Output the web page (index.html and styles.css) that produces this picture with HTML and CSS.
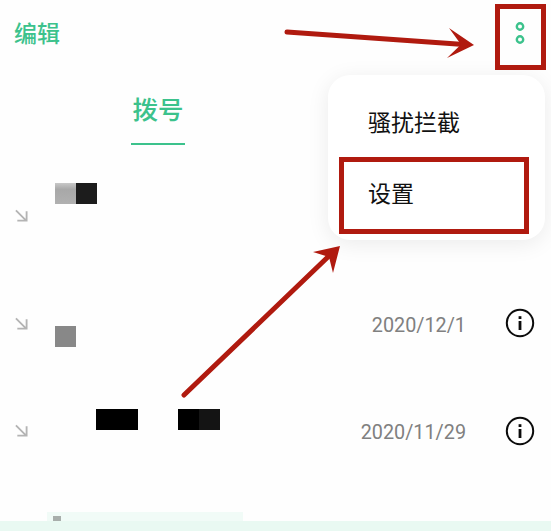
FILE: index.html
```html
<!DOCTYPE html>
<html lang="zh">
<head>
<meta charset="utf-8">
<title>拨号</title>
<link rel="stylesheet" href="styles.css">
</head>
<body>
<div class="screen">
  <header class="top">
    <span class="edit">编辑</span>
    <svg class="dots" viewBox="0 0 16 28" width="16" height="28"><circle cx="8" cy="7.5" r="3.2" /><circle cx="8" cy="20.5" r="3.2" /></svg>
  </header>
  <nav class="tabs"><div class="tab">拨号</div></nav>
  <section class="row row-a">
    <svg class="dir" viewBox="0 0 14 14"><path d="M1 1.5 11.5 12M12.5 2.5V12.5H2.5"/></svg>
    <div class="who"><i class="blur"></i><i class="ink"></i></div>
  </section>
  <section class="row row-b">
    <svg class="dir" viewBox="0 0 14 14"><path d="M1 1.5 11.5 12M12.5 2.5V12.5H2.5"/></svg>
    <div class="who"><i class="grey"></i></div>
    <span class="date">2020/12/1</span>
    <svg class="info" viewBox="0 0 30 30"><circle cx="15" cy="15" r="13.2"/><rect x="13.6" y="13" width="2.8" height="9"/><rect x="13.6" y="8.2" width="2.8" height="2.8"/></svg>
  </section>
  <section class="row row-c">
    <svg class="dir" viewBox="0 0 14 14"><path d="M1 1.5 11.5 12M12.5 2.5V12.5H2.5"/></svg>
    <div class="who who-c"><i class="ink wide"></i><i class="ink wide two"></i></div>
    <span class="date">2020/11/29</span>
    <svg class="info" viewBox="0 0 30 30"><circle cx="15" cy="15" r="13.2"/><rect x="13.6" y="13" width="2.8" height="9"/><rect x="13.6" y="8.2" width="2.8" height="2.8"/></svg>
  </section>
  <div class="peek"><i class="smudge"></i></div>
  <div class="strip"></div>

  <div class="menu">
    <div class="menu-item">骚扰拦截</div>
    <div class="menu-item">设置</div>
  </div>
  <div class="mark mark-dots"></div>
  <div class="mark mark-set"></div>
  <svg class="arrows" viewBox="0 0 551 531" width="551" height="531">
    <path class="shaft" d="M287 32 464 44.5"/>
    <path class="head" d="M449 28 474 45 447 58 461 44.5Z"/>
    <path class="shaft" d="M184 395 330 255"/>
    <path class="head" d="M340 246 313 252 329 257 333 273Z"/>
  </svg>
</div>
</body>
</html>
```

FILE: styles.css
```css
* { box-sizing: border-box; }
html, body { margin: 0; padding: 0; background: #fff; }
.screen {
  position: relative;
  width: 551px;
  height: 531px;
  overflow: hidden;
  background: #fefefe;
  font-family: "Noto Sans CJK SC", "Liberation Sans", sans-serif;
}
.top {
  display: flex;
  justify-content: space-between;
  align-items: center;
  height: 66px;
  padding: 0 23px 0 14px;
}
.edit { margin-top: -2px; font-size: 23px; font-weight: 500; line-height: 32px; color: #3cc28c; }
.dots { display: block; }
.dots circle { fill: none; stroke: #3cc28c; stroke-width: 2.4; }
.tabs { display: flex; padding-left: 131px; height: 79px; }
.tab {
  width: 54px;
  height: 79px;
  padding-top: 23px;
  border-bottom: 2px solid #3cc28c;
  color: #3cc28c;
  font-size: 25.5px;
  font-weight: 500;
  line-height: 38px;
  text-align: center;
  white-space: nowrap;
}
.row { display: flex; align-items: flex-start; padding-left: 15px; }
.row-a { height: 108px; padding-top: 64px; }
.row-b { height: 107px; padding-top: 64px; }
.row-c { height: 107px; padding-top: 64px; }
.dir { display: block; width: 13px; height: 13px; flex: none; fill: none; stroke: #b4b4b4; stroke-width: 2; }
.who { display: flex; margin-left: 27px; }
.row-a .who { margin-top: -26px; }
.row-b .who { margin-top: 9px; }
.who-c { margin-top: -15px; padding-left: 41px; gap: 40px; }
.who i { display: block; height: 21px; width: 21px; }
.blur { background: linear-gradient(#c8c8c8, #a8a8a8 30%, #b0b0b0); }
.ink { background: #1c1c1c; }
.grey { background: #888; }
.ink.wide { width: 42px; background: #000; }
.ink.two { background: linear-gradient(90deg, #000 50%, #141414 50%); }
.date {
  margin-left: auto;
  font-family: Roboto, "Liberation Sans", sans-serif;
  font-size: 19.8px;
  line-height: 24px;
  color: #808080;
  white-space: nowrap;
}
.row-b .date { margin-top: -3px; margin-right: 39px; }
.row-c .date { margin-top: -3px; margin-right: 39px; }
.info { display: block; flex: none; width: 30px; height: 30px; margin-right: 16px; }
.row-b .info { margin-top: -9px; }
.row-c .info { margin-top: -8px; }
.info circle { fill: #fff; stroke: #0c0c0c; stroke-width: 2; }
.info rect { fill: #0c0c0c; }
.peek {
  position: absolute;
  left: 47px;
  top: 512px;
  width: 196px;
  height: 9px;
  background: #f1fbf7;
}
.smudge {
  position: absolute;
  left: 6px;
  top: 4px;
  width: 8px;
  height: 5px;
  background: #a8aeab;
}
.strip {
  position: absolute;
  left: 0;
  right: 0;
  bottom: 0;
  height: 10px;
  background: #e9f9f2;
}
.menu {
  position: absolute;
  left: 328px;
  top: 75px;
  width: 217px;
  height: 165px;
  padding: 29px 0 0 40px;
  border-radius: 22px;
  background: #fff;
  box-shadow: 0 4px 22px rgba(0, 0, 0, .08);
}
.menu-item {
  height: 71px;
  font-size: 23px;
  line-height: 34px;
  color: #111;
}
.mark { position: absolute; border: 5px solid #b01a0f; }
.mark-dots { left: 495px; top: 4px; width: 51px; height: 66px; }
.mark-set { left: 339px; top: 157px; width: 190px; height: 77px; }
.arrows { position: absolute; left: 0; top: 0; pointer-events: none; }
.shaft { fill: none; stroke: #b01a0f; stroke-width: 5; stroke-linecap: round; }
.head { fill: #b01a0f; }
```
